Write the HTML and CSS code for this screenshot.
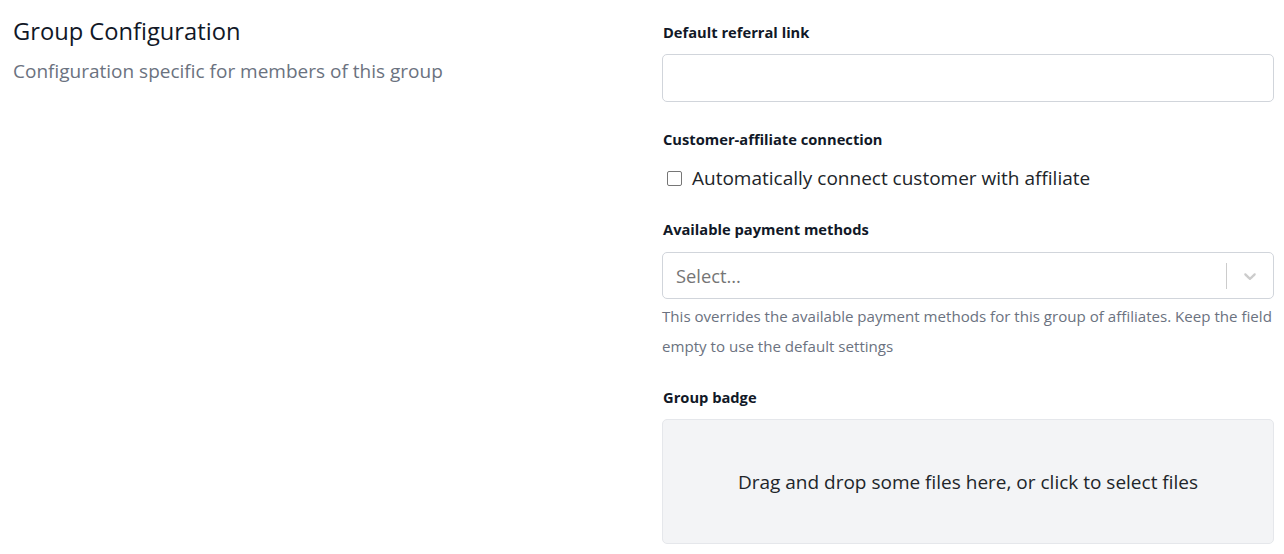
FILE: index.html
```html
<!DOCTYPE html>
<html lang="en">
<head>
<meta charset="utf-8">
<title>Group Configuration</title>
<link rel="stylesheet" href="styles.css">
</head>
<body>
<div class="page">
  <div class="intro">
    <h2 class="intro-title">Group Configuration</h2>
    <p class="intro-sub">Configuration specific for members of this group</p>
  </div>
  <form class="form">
    <div class="field field-link">
      <label class="label" for="ref">Default referral link</label>
      <input class="input" id="ref" type="text">
    </div>
    <div class="field field-conn">
      <div class="label">Customer-affiliate connection</div>
      <label class="check-row">
        <span class="check-box"></span>
        <span class="check-text">Automatically connect customer with affiliate</span>
      </label>
    </div>
    <div class="field field-pay">
      <div class="label">Available payment methods</div>
      <div class="select">
        <span class="select-placeholder">Select...</span>
        <span class="select-indicators">
          <span class="select-sep"></span>
          <span class="select-arrow">
            <svg width="20" height="20" viewBox="0 0 20 20"><path fill="#cccccc" d="M4.516 7.548c0.436-0.446 1.043-0.481 1.576 0l3.908 3.747 3.908-3.747c0.533-0.481 1.141-0.446 1.574 0 0.436 0.445 0.408 1.197 0 1.615-0.406 0.418-4.695 4.502-4.695 4.502-0.217 0.223-0.502 0.335-0.787 0.335s-0.57-0.112-0.789-0.335c0 0-4.287-4.084-4.695-4.502s-0.436-1.170 0-1.615z"/></svg>
          </span>
        </span>
      </div>
      <p class="help">This overrides the available payment methods for this group of affiliates. Keep the field empty to use the default settings</p>
    </div>
    <div class="field field-badge">
      <div class="label">Group badge</div>
      <div class="dropzone">Drag and drop some files here, or click to select files</div>
    </div>
  </form>
</div>
</body>
</html>
```

FILE: styles.css
```css
* { box-sizing: border-box; }
html, body { margin: 0; padding: 0; background: #ffffff; }
body {
  font-family: "Open Sans", "Noto Sans", sans-serif;
  color: #212529;
}
.page {
  display: grid;
  grid-template-columns: 1fr 612px;
  column-gap: 24px;
  padding: 16px 10px 0 13px;
}
.intro-title {
  margin: 0;
  font-size: 23.7px;
  line-height: 30px;
  font-weight: 400;
  color: #111827;
}
.intro-sub {
  margin: 11px 0 0;
  font-size: 19px;
  line-height: 28px;
  color: #6b7280;
}
.form {
  display: flex;
  flex-direction: column;
  padding-top: 7px;
  margin: 0;
}
.field { display: flex; flex-direction: column; }
.field-link { margin-bottom: 28px; }
.field-conn { margin-bottom: 25px; }
.field-pay { margin-bottom: 27px; }
.label {
  display: block;
  font-size: 14.7px;
  line-height: 18px;
  font-weight: 700;
  color: #111827;
  margin-bottom: 14px;
  padding-left: 1px;
}
.field-link .label { margin-bottom: 13px; }
.field-badge .label { margin-bottom: 13px; }
.input {
  height: 48px;
  border: 1px solid #d1d5db;
  border-radius: 5px;
  background: #fff;
  font: inherit;
  padding: 0 12px;
}
.check-row {
  display: flex;
  align-items: center;
  height: 34px;
  margin-top: -1px;
  padding-left: 5px;
}
.check-box {
  width: 15px;
  height: 15px;
  border: 1px solid #767676;
  border-radius: 2px;
  background: #fff;
  margin-right: 10px;
}
.check-text {
  font-size: 19px;
  color: #212529;
}
.select {
  display: flex;
  align-items: center;
  height: 47px;
  border: 1px solid #d1d5db;
  border-radius: 5px;
  background: #fff;
}
.select-placeholder {
  flex: 1;
  padding-left: 13px;
  font-size: 18.3px;
  color: #757575;
}
.select-indicators {
  display: flex;
  align-items: center;
  align-self: stretch;
}
.select-sep {
  width: 1px;
  height: 26px;
  background: #cccccc;
}
.select-arrow {
  display: flex;
  align-items: center;
  padding: 0 13px 0 13px;
}
.help {
  margin: 2px 0 0;
  font-size: 15.1px;
  line-height: 30px;
  color: #6b7280;
}
.dropzone {
  height: 125px;
  border: 1px solid #e5e7eb;
  border-radius: 5px;
  background: #f3f4f6;
  display: flex;
  align-items: center;
  justify-content: center;
  font-size: 19px;
  color: #212529;
}
```
